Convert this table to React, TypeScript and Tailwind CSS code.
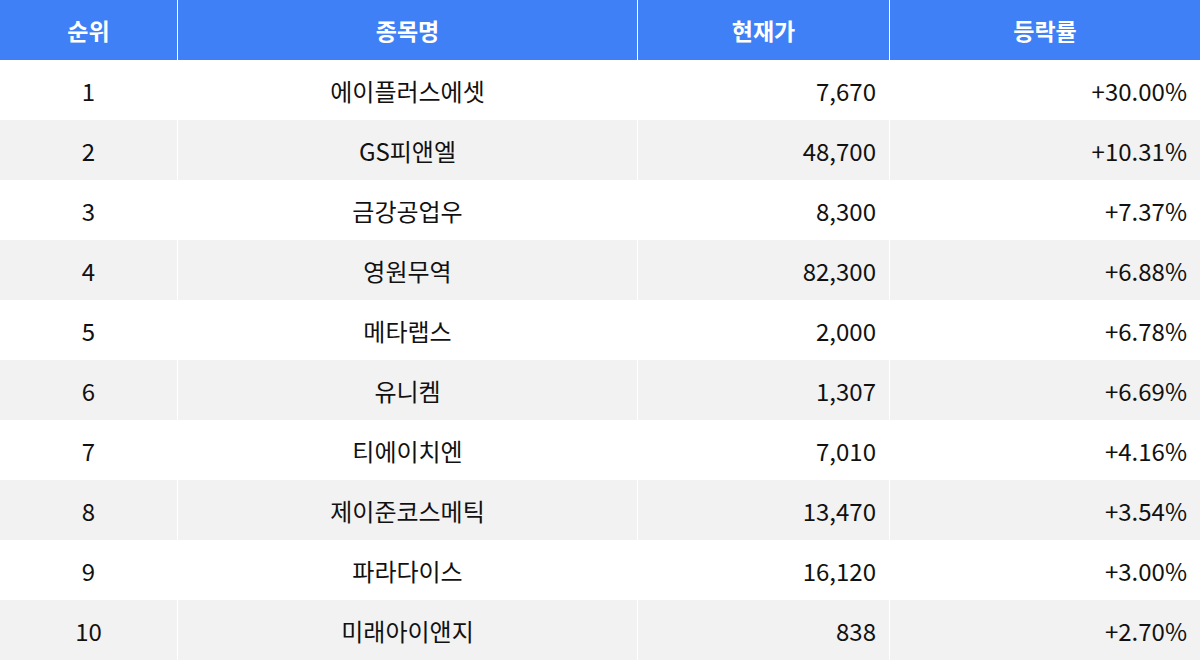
import React from 'react';

const rows = [
  ['1', '에이플러스에셋', '7,670', '+30.00%'],
  ['2', 'GS피앤엘', '48,700', '+10.31%'],
  ['3', '금강공업우', '8,300', '+7.37%'],
  ['4', '영원무역', '82,300', '+6.88%'],
  ['5', '메타랩스', '2,000', '+6.78%'],
  ['6', '유니켐', '1,307', '+6.69%'],
  ['7', '티에이치엔', '7,010', '+4.16%'],
  ['8', '제이준코스메틱', '13,470', '+3.54%'],
  ['9', '파라다이스', '16,120', '+3.00%'],
  ['10', '미래아이앤지', '838', '+2.70%'],
];

function App() {
  return (
    <div className="w-[1200px] h-[661px] bg-white text-[#111] font-['Noto_Sans_CJK_KR',sans-serif] text-[24px]">
      <div className="grid grid-cols-[177px_459px_251px_310px] gap-x-px bg-white">
        {['순위', '종목명', '현재가', '등락률'].map((h) => (
          <div key={h} className="h-[60px] bg-[#4080f6] text-white text-[23px] font-bold flex items-center justify-center">
            {h}
          </div>
        ))}
        {rows.map((r, i) => {
          const bg = i % 2 === 1 ? 'bg-[#f2f2f2]' : 'bg-white';
          return (
            <React.Fragment key={r[0]}>
              <div className={`h-[60px] ${bg} flex items-center justify-center pt-[2px]`}>{r[0]}</div>
              <div className={`h-[60px] ${bg} flex items-center justify-center pt-[2px]`}>{r[1]}</div>
              <div className={`h-[60px] ${bg} flex items-center justify-end pr-[13px] pt-[2px]`}>{r[2]}</div>
              <div className={`h-[60px] ${bg} flex items-center justify-end pr-[13px] pt-[2px]`}>{r[3]}</div>
            </React.Fragment>
          );
        })}
      </div>
    </div>
  );
}

export default App;
